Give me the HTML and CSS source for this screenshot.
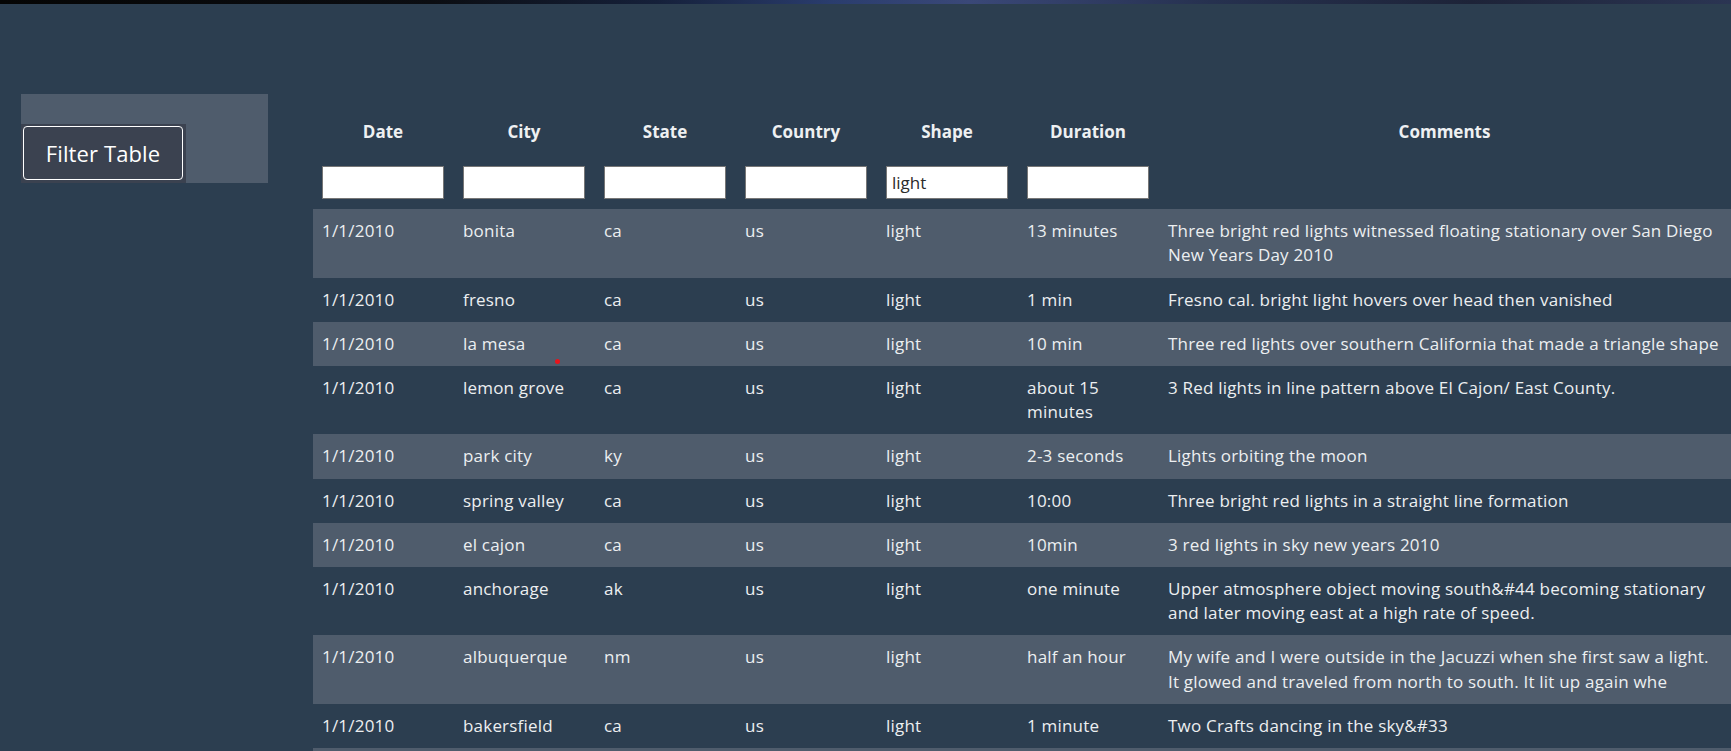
FILE: index.html
```html
<!DOCTYPE html>
<html lang="en">
<head>
<meta charset="utf-8">
<title>UFO Sightings</title>
<link rel="stylesheet" href="styles.css">
</head>
<body>
<div class="banner"></div>
<div class="layout">
  <aside class="sidebar">
    <div class="filter-panel">
      <div class="btn-wrap"><button class="filter-btn" type="button">Filter Table</button></div>
    </div>
  </aside>
  <main class="content">
    <table class="ufo-table">
      <colgroup>
        <col class="c-std"><col class="c-std"><col class="c-std"><col class="c-std"><col class="c-std"><col class="c-std"><col class="c-comments">
      </colgroup>
      <thead>
        <tr class="titles">
          <th>Date</th><th>City</th><th>State</th><th>Country</th><th>Shape</th><th>Duration</th><th>Comments</th>
        </tr>
        <tr class="filters">
          <td><input class="filter-input" type="text"></td>
          <td><input class="filter-input" type="text"></td>
          <td><input class="filter-input" type="text"></td>
          <td><input class="filter-input" type="text"></td>
          <td><input class="filter-input" type="text" value="light"></td>
          <td><input class="filter-input" type="text"></td>
          <td></td>
        </tr>
      </thead>
      <tbody>
        <tr><td>1/1/2010</td><td>bonita</td><td>ca</td><td>us</td><td>light</td><td>13 minutes</td><td>Three bright red lights witnessed floating stationary over San Diego<br>New Years Day 2010</td></tr>
        <tr><td>1/1/2010</td><td>fresno</td><td>ca</td><td>us</td><td>light</td><td>1 min</td><td>Fresno cal. bright light hovers over head then vanished</td></tr>
        <tr><td>1/1/2010</td><td>la mesa</td><td>ca</td><td>us</td><td>light</td><td>10 min</td><td>Three red lights over southern California that made a triangle shape</td></tr>
        <tr><td>1/1/2010</td><td>lemon grove</td><td>ca</td><td>us</td><td>light</td><td>about 15<br>minutes</td><td>3 Red lights in line pattern above El Cajon/ East County.</td></tr>
        <tr><td>1/1/2010</td><td>park city</td><td>ky</td><td>us</td><td>light</td><td>2-3 seconds</td><td>Lights orbiting the moon</td></tr>
        <tr><td>1/1/2010</td><td>spring valley</td><td>ca</td><td>us</td><td>light</td><td>10:00</td><td>Three bright red lights in a straight line formation</td></tr>
        <tr><td>1/1/2010</td><td>el cajon</td><td>ca</td><td>us</td><td>light</td><td>10min</td><td>3 red lights in sky new years 2010</td></tr>
        <tr><td>1/1/2010</td><td>anchorage</td><td>ak</td><td>us</td><td>light</td><td>one minute</td><td>Upper atmosphere object moving south&amp;#44 becoming stationary<br>and later moving east at a high rate of speed.</td></tr>
        <tr><td>1/1/2010</td><td>albuquerque</td><td>nm</td><td>us</td><td>light</td><td>half an hour</td><td>My wife and I were outside in the Jacuzzi when she first saw a light.<br>It glowed and traveled from north to south. It lit up again whe</td></tr>
        <tr><td>1/1/2010</td><td>bakersfield</td><td>ca</td><td>us</td><td>light</td><td>1 minute</td><td>Two Crafts dancing in the sky&amp;#33</td></tr>
        <tr class="spacer-row"><td>&nbsp;</td><td>&nbsp;</td><td>&nbsp;</td><td>&nbsp;</td><td>&nbsp;</td><td>&nbsp;</td><td>&nbsp;</td></tr>
      </tbody>
    </table>
  </main>
</div>
<span class="cursor-dot"></span>
</body>
</html>
```
FILE: styles.css
```css
* { box-sizing: border-box; }

html, body {
  margin: 0;
  padding: 0;
  height: 100%;
  overflow: hidden;
}

body {
  background: #2c3e50;
  font-family: "Open Sans", Lato, sans-serif;
  color: #eceff1;
  position: relative;
}

.banner {
  height: 4px;
  background: linear-gradient(90deg, #050505 0%, #0b0d12 25%, #15203a 38%, #2a3d6e 48%, #3a4878 56%, #26314f 70%, #1d2338 85%, #2b3553 100%);
}

.layout {
  display: flex;
  align-items: flex-start;
  padding-top: 90px;
}

.sidebar {
  width: 313px;
  flex: 0 0 313px;
  padding-left: 21px;
}

.filter-panel {
  width: 247px;
  height: 89px;
  background: #4f5c6c;
  padding-top: 30px;
}

.btn-wrap {
  width: 165px;
  height: 59px;
  background: #3b4250;
  padding: 2px 3px 3px 2px;
}

.filter-btn {
  display: block;
  width: 100%;
  height: 100%;
  background: #3b4250;
  color: #ffffff;
  border: 1px solid #ffffff;
  border-radius: 4px;
  font-family: "Open Sans", Lato, sans-serif;
  font-size: 22px;
  letter-spacing: 0.1px;
  padding: 0;
  cursor: pointer;
}

.content {
  flex: 1 1 auto;
  margin-top: 14px;
}

.ufo-table {
  width: 100%;
  border-collapse: collapse;
  table-layout: fixed;
  font-size: 17px;
  letter-spacing: 0.2px;
}

.c-std { width: 141px; }

.ufo-table th,
.ufo-table td {
  padding: 10px 10px 10px 9px;
  line-height: 24.2px;
  text-align: left;
  vertical-align: top;
  white-space: nowrap;
}

.titles th {
  text-align: center;
  font-weight: 700;
  font-size: 17px;
  letter-spacing: 0;
  padding-top: 12px;
  padding-bottom: 12px;
  color: #eef0f2;
}

.filters td {
  padding-top: 10px;
  padding-bottom: 10px;
  line-height: 0;
}

.filter-input {
  width: 122px;
  height: 33px;
  border: 1px solid #767676;
  background: #ffffff;
  color: #2b2b2b;
  font-family: "Open Sans", Lato, sans-serif;
  font-size: 17px;
  padding: 0 5px;
  margin: 0;
  vertical-align: top;
}

.ufo-table tbody tr:nth-child(odd) { background: #4f5c6c; }
.ufo-table tbody tr:nth-child(even) { background: #2c3e50; }

.cursor-dot {
  position: absolute;
  left: 555px;
  top: 359px;
  width: 5px;
  height: 5px;
  border-radius: 50%;
  background: #e8141c;
}
```
